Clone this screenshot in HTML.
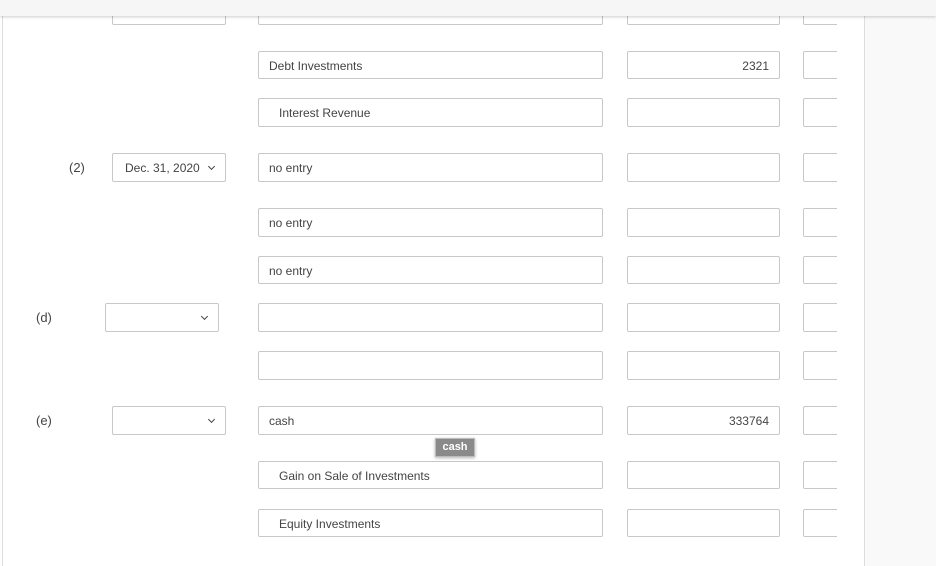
<!DOCTYPE html>
<html><head><meta charset="utf-8"><style>
html,body{margin:0;padding:0;width:936px;height:566px;overflow:hidden;background:#fff;font-family:"Liberation Sans",sans-serif;}
.top{position:absolute;left:0;top:0;width:936px;height:16px;background:#f6f6f6;box-shadow:0 1px 3px rgba(0,0,0,.2);z-index:5}
.lb{position:absolute;left:2px;top:0;width:1px;height:566px;background:#ddd}
.rp{position:absolute;left:864px;top:0;width:72px;height:566px;background:#f9f9f9;border-left:1px solid #ddd}
.clip{position:absolute;left:0;top:0;width:837px;height:566px;overflow:hidden}
.b{position:absolute;box-sizing:border-box;border:1px solid #c8c8c8;border-radius:2px;background:#fff;font-size:12px;color:#444;line-height:29px;padding-left:10px;white-space:nowrap}
.a{left:258px;width:345px}
.m{left:627px;width:153px;text-align:right;padding-right:10px}
.t{left:803px;width:40px}
.s{width:114px;padding-left:12px}
.s:after{content:"";position:absolute;right:11px;top:10px;width:4px;height:4px;border-right:1.5px solid #444;border-bottom:1.5px solid #444;transform:rotate(45deg)}
.ind{padding-left:20px}
.l{position:absolute;font-size:13px;color:#444}
.tip{position:absolute;left:435px;top:438px;width:40px;height:19px;background:#8a8a8a;border:1px solid #bbb;box-sizing:border-box;color:#fff;font-weight:bold;font-size:11px;text-align:center;line-height:17px;box-shadow:0 1px 3px rgba(0,0,0,.3)}
</style></head><body>
<div class="lb"></div>
<div class="rp"></div>
<div class="clip">
<div class="b s" style="left:112px;top:-4px;height:29px"></div>
<div class="b a" style="top:-4px;height:29px"></div>
<div class="b m" style="top:-4px;height:29px"></div>
<div class="b t" style="top:-4px;height:29px"></div>

<div class="b a" style="top:51px;height:28px">Debt Investments</div>
<div class="b m" style="top:51px;height:28px">2321</div>
<div class="b t" style="top:51px;height:28px"></div>

<div class="b a ind" style="top:98px;height:29px">Interest Revenue</div>
<div class="b m" style="top:98px;height:29px"></div>
<div class="b t" style="top:98px;height:29px"></div>

<div class="l" style="left:69px;top:160px">(2)</div>
<div class="b s" style="left:112px;top:153px;height:29px">Dec. 31, 2020</div>
<div class="b a" style="top:153px;height:29px">no entry</div>
<div class="b m" style="top:153px;height:29px"></div>
<div class="b t" style="top:153px;height:29px"></div>

<div class="b a" style="top:208px;height:29px">no entry</div>
<div class="b m" style="top:208px;height:29px"></div>
<div class="b t" style="top:208px;height:29px"></div>

<div class="b a" style="top:256px;height:28px">no entry</div>
<div class="b m" style="top:256px;height:28px"></div>
<div class="b t" style="top:256px;height:28px"></div>

<div class="l" style="left:36px;top:310px">(d)</div>
<div class="b s" style="left:105px;top:303px;height:29px"></div>
<div class="b a" style="top:303px;height:29px"></div>
<div class="b m" style="top:303px;height:29px"></div>
<div class="b t" style="top:303px;height:29px"></div>

<div class="b a" style="top:351px;height:29px"></div>
<div class="b m" style="top:351px;height:29px"></div>
<div class="b t" style="top:351px;height:29px"></div>

<div class="l" style="left:36px;top:413px">(e)</div>
<div class="b s" style="left:112px;top:406px;height:29px"></div>
<div class="b a" style="top:406px;height:29px">cash</div>
<div class="b m" style="top:406px;height:29px">333764</div>
<div class="b t" style="top:406px;height:29px"></div>

<div class="b a ind" style="top:461px;height:28px">Gain on Sale of Investments</div>
<div class="b m" style="top:461px;height:28px"></div>
<div class="b t" style="top:461px;height:28px"></div>

<div class="b a ind" style="top:509px;height:28px">Equity Investments</div>
<div class="b m" style="top:509px;height:28px"></div>
<div class="b t" style="top:509px;height:28px"></div>

<div class="tip">cash</div>
</div>
<div class="top"></div>
</body></html>
